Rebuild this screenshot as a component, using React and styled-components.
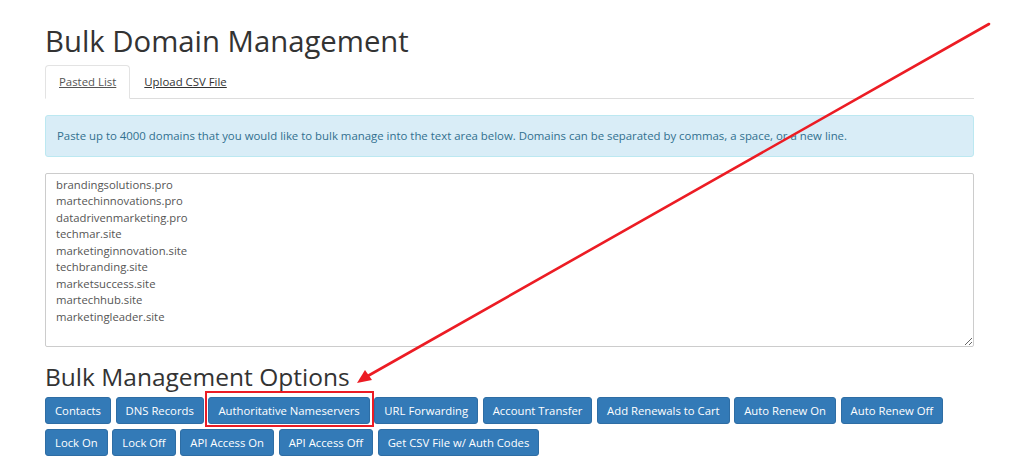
import React from 'react'
import styled, { createGlobalStyle } from 'styled-components'

const GlobalStyle = createGlobalStyle`
  html, body {
    margin: 0;
    padding: 0;
    background: #fff;
  }
  body {
    font-family: "Open Sans", "Noto Sans", sans-serif;
    color: #333;
  }
`

const Page = styled.div`
  position: relative;
  width: 1024px;
  height: 475px;
  overflow: hidden;
`

const Container = styled.div`
  width: 929px;
  padding: 21px 0 0 45px;
`

const Title = styled.h1`
  margin: 0;
  font-size: 29.3px;
  font-weight: 400;
  line-height: 40px;
  color: #333;
`

const Tabs = styled.ul`
  display: flex;
  list-style: none;
  margin: 4px 0 0;
  padding: 0;
  border-bottom: 1px solid #ddd;
`

const Tab = styled.li`
  margin-bottom: -1px;

  & a {
    display: block;
    padding: 7px 13px 8px;
    line-height: 17px;
    font-size: 11.4px;
    color: #333;
    text-decoration: underline;
    border: 1px solid transparent;
    border-radius: 4px 4px 0 0;
    ${p => p.$active && `
      background: #fff;
      border-color: #e3e3e3 #e3e3e3 transparent;
      color: #555;
    `}
  }
`

const Alert = styled.div`
  margin-top: 16px;
  padding: 11px 11px 12px;
  font-size: 11.4px;
  line-height: 17px;
  color: #31708f;
  background: #d9edf7;
  border: 1px solid #bce8f1;
  border-radius: 3px;
`

const DomainList = styled.textarea`
  display: block;
  box-sizing: border-box;
  width: 929px;
  height: 174px;
  margin-top: 16px;
  padding: 3px 10px;
  font-family: "Open Sans", "Noto Sans", sans-serif;
  font-size: 11.3px;
  line-height: 16.45px;
  color: #555;
  border: 1px solid #ccc;
  border-radius: 2px;
  resize: vertical;
  outline: none;
`

const SubTitle = styled.h2`
  margin: 15px 0 0;
  font-size: 24.5px;
  font-weight: 400;
  line-height: 30px;
  color: #333;
`

const ButtonRow = styled.div`
  display: flex;
  gap: 4.6px;
  margin-top: 5px;
`

const Button = styled.button`
  height: 27px;
  padding: 0 9px;
  font-family: "Open Sans", "Noto Sans", sans-serif;
  font-size: 11.3px;
  color: #fff;
  background: #337ab7;
  border: 1px solid #2e6da4;
  border-radius: 3px;
  white-space: nowrap;
  cursor: pointer;
`

// red callout frame drawn over one of the buttons
const Highlight = styled.span`
  position: relative;
  display: inline-flex;

  &::after {
    content: '';
    position: absolute;
    left: -3px;
    right: -4px;
    top: -6px;
    bottom: -3px;
    border: 2px solid #ec1c24;
    pointer-events: none;
  }
`

const Arrow = styled.svg`
  position: absolute;
  left: 0;
  top: 0;
  pointer-events: none;
`

const domains = [
  'brandingsolutions.pro',
  'martechinnovations.pro',
  'datadrivenmarketing.pro',
  'techmar.site',
  'marketinginnovation.site',
  'techbranding.site',
  'marketsuccess.site',
  'martechhub.site',
  'marketingleader.site',
]

const firstRow = ['Contacts', 'DNS Records', 'Authoritative Nameservers', 'URL Forwarding', 'Account Transfer', 'Add Renewals to Cart', 'Auto Renew On', 'Auto Renew Off']
const secondRow = ['Lock On', 'Lock Off', 'API Access On', 'API Access Off', 'Get CSV File w/ Auth Codes']

export default function App() {
  return (
    <Page>
      <GlobalStyle />
      <Container>
        <Title>Bulk Domain Management</Title>
        <Tabs>
          <Tab $active><a href="#pasted">Pasted List</a></Tab>
          <Tab><a href="#upload">Upload CSV File</a></Tab>
        </Tabs>
        <Alert>
          Paste up to 4000 domains that you would like to bulk manage into the text area below. Domains can be separated by commas, a space, or a new line.
        </Alert>
        <DomainList defaultValue={domains.join('\n')} spellCheck={false} />
        <SubTitle>Bulk Management Options</SubTitle>
        <ButtonRow>
          {firstRow.map(label =>
            label === 'Authoritative Nameservers'
              ? <Highlight key={label}><Button>{label}</Button></Highlight>
              : <Button key={label}>{label}</Button>
          )}
        </ButtonRow>
        <ButtonRow>
          {secondRow.map(label => <Button key={label}>{label}</Button>)}
        </ButtonRow>
      </Container>
      <Arrow width="1024" height="475" viewBox="0 0 1024 475">
        <line x1="989" y1="24" x2="366" y2="377" stroke="#ec1c24" strokeWidth="2.6" strokeLinecap="round" />
        <polygon points="357,383 365,370 372,380" fill="#ec1c24" />
      </Arrow>
    </Page>
  )
}
